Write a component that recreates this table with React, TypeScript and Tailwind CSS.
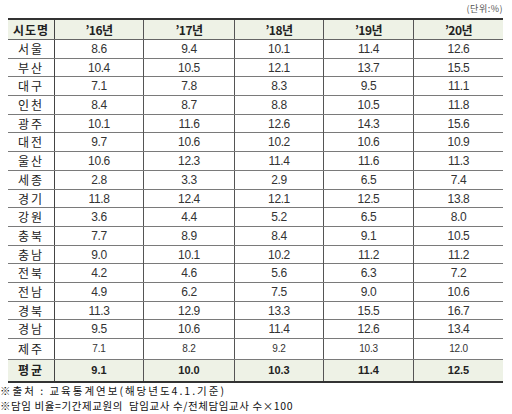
import React from "react";

const rows: [string, string[]][] = [
  ["서울", ["8.6", "9.4", "10.1", "11.4", "12.6"]],
  ["부산", ["10.4", "10.5", "12.1", "13.7", "15.5"]],
  ["대구", ["7.1", "7.8", "8.3", "9.5", "11.1"]],
  ["인천", ["8.4", "8.7", "8.8", "10.5", "11.8"]],
  ["광주", ["10.1", "11.6", "12.6", "14.3", "15.6"]],
  ["대전", ["9.7", "10.6", "10.2", "10.6", "10.9"]],
  ["울산", ["10.6", "12.3", "11.4", "11.6", "11.3"]],
  ["세종", ["2.8", "3.3", "2.9", "6.5", "7.4"]],
  ["경기", ["11.8", "12.4", "12.1", "12.5", "13.8"]],
  ["강원", ["3.6", "4.4", "5.2", "6.5", "8.0"]],
  ["충북", ["7.7", "8.9", "8.4", "9.1", "10.5"]],
  ["충남", ["9.0", "10.1", "10.2", "11.2", "11.2"]],
  ["전북", ["4.2", "4.6", "5.6", "6.3", "7.2"]],
  ["전남", ["4.9", "6.2", "7.5", "9.0", "10.6"]],
  ["경북", ["11.3", "12.9", "13.3", "15.5", "16.7"]],
  ["경남", ["9.5", "10.6", "11.4", "12.6", "13.4"]],
];

const years = ["’16년", "’17년", "’18년", "’19년", "’20년"];

function Row({
  name,
  vals,
  h,
  variant,
}: {
  name: string;
  vals: string[];
  h: string;
  variant: "normal" | "small" | "avg";
}) {
  const bg = variant === "avg" ? "bg-[#eef2e6]" : "bg-white";
  const numCls =
    variant === "avg"
      ? "text-[11px] font-bold text-[#222]"
      : variant === "small"
      ? "text-[10px] text-[#333] tracking-[-0.2px]"
      : "text-[12px] text-[#333] tracking-[-0.4px]";
  const border = variant === "avg" ? "" : "border-b border-[#7a7a7a]";
  return (
    <div className={`grid grid-cols-[47px_89px_91px_89px_90px_89px] ${h} ${bg} ${border}`}>
      <div
        className={`flex items-center justify-center border-r border-[#444] text-[12px] tracking-[2px] font-['Noto_Sans_CJK_KR',sans-serif] ${
          variant === "avg" ? "font-bold text-[#222]" : "text-[#222]"
        }`}
      >
        {name}
      </div>
      {vals.map((v, i) => (
        <div
          key={i}
          className={`flex items-center justify-center font-['Liberation_Sans',Arial,sans-serif] ${
            i < 4 ? "border-r border-[#555]" : ""
          } ${numCls}`}
        >
          {v}
        </div>
      ))}
    </div>
  );
}

export default function App() {
  return (
    <div className="w-[512px] h-[414px] bg-white overflow-hidden font-['Noto_Sans_CJK_KR',sans-serif]">
      <div className="h-[18px] flex justify-end items-start pr-[9px] pt-[3px]">
        <span className="text-[9px] leading-[11px] text-[#555] tracking-[0.5px]">(단위:%)</span>
      </div>
      <div className="ml-[8px] w-[495px] border-t-2 border-b-2 border-[#333]">
        <div className="grid grid-cols-[47px_89px_91px_89px_90px_89px] h-[20px] bg-[#eef2e6] border-b border-[#666]">
          <div className="flex items-center justify-center border-r border-[#444] text-[12px] font-bold tracking-[1px] text-[#222]">
            시도명
          </div>
          {years.map((y, i) => (
            <div
              key={i}
              className={`flex items-center justify-center ${
                i < 4 ? "border-r border-[#555]" : ""
              } text-[12px] font-bold text-[#222] tracking-[-0.5px]`}
            >
              {y}
            </div>
          ))}
        </div>
        {rows.map(([n, v]) => (
          <Row key={n} name={n} vals={v} h="h-[18.7px]" variant="normal" />
        ))}
        <Row name="제주" vals={["7.1", "8.2", "9.2", "10.3", "12.0"]} h="h-[20.5px]" variant="small" />
        <Row name="평균" vals={["9.1", "10.0", "10.3", "11.4", "12.5"]} h="h-[21px]" variant="avg" />
      </div>
      <div className="text-[10.5px] leading-[15px] text-[#111] whitespace-pre">
        <div className="tracking-[2px]">{"※출처 : 교육통계연보(해당년도4.1.기준)"}</div>
        <div className="tracking-[0.6px]">{"※담임 비율=기간제교원의  담임교사 수/전체담임교사 수×100"}</div>
      </div>
    </div>
  );
}
